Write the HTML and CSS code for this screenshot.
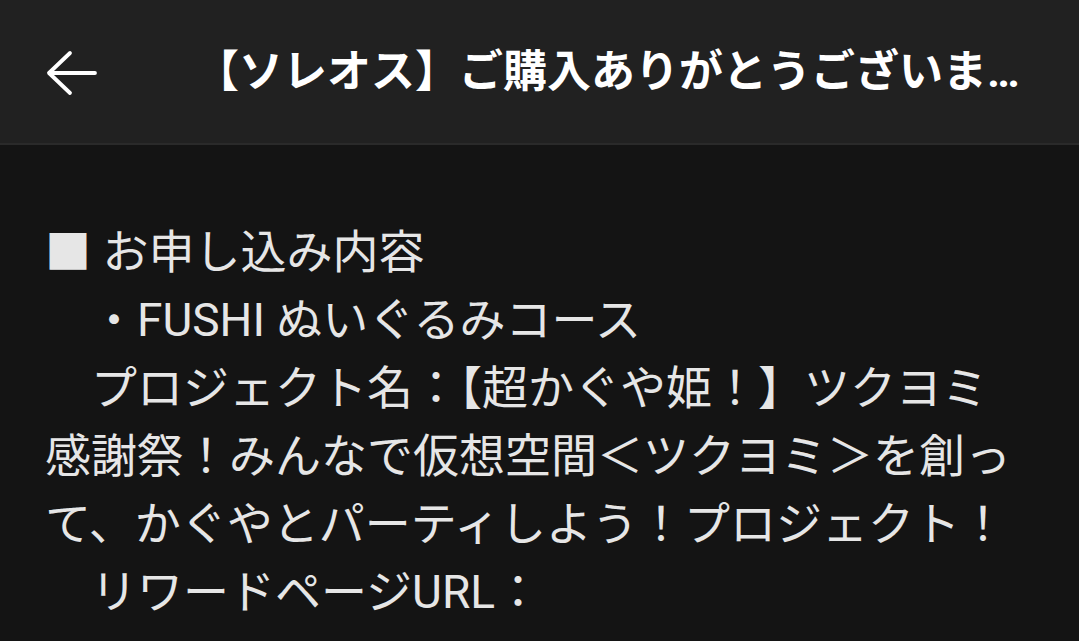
FILE: index.html
```html
<!DOCTYPE html>
<html lang="ja">
<head>
<meta charset="utf-8">
<title>メール</title>
<link rel="stylesheet" href="styles.css">
</head>
<body>
<header class="appbar">
  <div class="back" aria-label="戻る">
    <svg width="52" height="46" viewBox="0 0 52 46">
      <path d="M24 3 L3 23 L24 43 M3 23 L49 23" fill="none" stroke="#ffffff" stroke-width="3.8" stroke-linecap="round" stroke-linejoin="round"/>
    </svg>
  </div>
  <h1 class="title">【ソレオス】ご購入ありがとうございます。お申し込み内容のご確認</h1>
</header>
<main class="mail">
  <div class="line">■ お申し込み内容</div>
  <div class="line">　・FUSHI ぬいぐるみコース</div>
  <div class="line">　プロジェクト名：【超かぐや姫！】ツクヨミ感謝祭！みんなで仮想空間＜ツクヨミ＞を創って、かぐやとパーティしよう！プロジェクト！</div>
  <div class="line">　リワードページURL：</div>
</main>
</body>
</html>
```

FILE: styles.css
```css
html, body {
  margin: 0;
  padding: 0;
  background: #141414;
}
body {
  width: 1079px;
  height: 641px;
  overflow: hidden;
  font-family: Roboto, "Noto Sans CJK JP", sans-serif;
}
.appbar {
  height: 145px;
  background: #212121;
  border-bottom: 2px solid #2a2a2a;
  display: flex;
  align-items: center;
  padding-left: 46px;
  padding-right: 44px;
  box-sizing: border-box;
}
.back {
  width: 52px;
  height: 46px;
  flex: none;
  display: flex;
  margin-top: 2px;
}
.title {
  margin: 0 0 0 97px;
  flex: 1;
  min-width: 0;
  color: #ffffff;
  font-family: Roboto, "Noto Sans CJK JP", sans-serif;
  font-weight: 700;
  font-size: 44px;
  line-height: 60px;
  white-space: nowrap;
  overflow: hidden;
  text-overflow: ellipsis;
}
.mail {
  padding: 73px 50px 0 45px;
  color: #e6e6e6;
  font-size: 46px;
  line-height: 68px;
}
.line {
  margin: 0;
}
```
